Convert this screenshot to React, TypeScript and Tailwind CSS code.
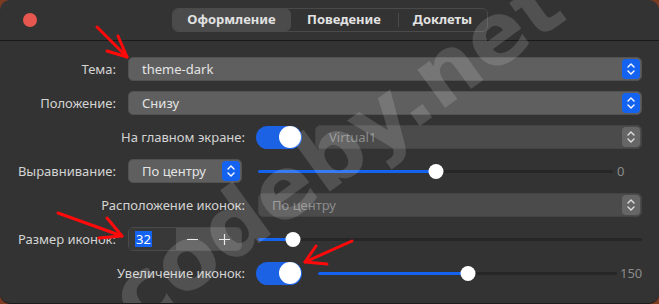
import React from 'react';

const font = { fontFamily: '"Noto Sans", "Open Sans", sans-serif' };

const Chevrons: React.FC<{ color?: string }> = ({ color = '#ffffff' }) => (
  <svg width="10" height="16" viewBox="0 0 10 16" fill="none">
    <path d="M2 6 L5 3 L8 6" stroke={color} strokeWidth="1.4" strokeLinecap="round" strokeLinejoin="round" />
    <path d="M2 10 L5 13 L8 10" stroke={color} strokeWidth="1.4" strokeLinecap="round" strokeLinejoin="round" />
  </svg>
);

const Combo: React.FC<{ value: string; disabled?: boolean; className?: string }> = ({ value, disabled, className }) => (
  <div
    className={`h-6 rounded-[5px] border flex items-center justify-between pl-[13px] pr-[1px] ${
      disabled ? 'bg-[#4b4b4b] border-[#444444] text-[#8c8c8c]' : 'bg-[#5f5f5f] border-[#525252] text-[#e4e4e4]'
    } ${className ?? ''}`}
  >
    <span className="text-[13px] leading-none">{value}</span>
    <div
      className={`w-[18px] h-[20px] rounded-[4px] flex items-center justify-center ${
        disabled ? 'bg-[#666666]' : 'bg-[#1463f0]'
      }`}
    >
      <Chevrons color={disabled ? '#e0e0e0' : '#ffffff'} />
    </div>
  </div>
);

const Toggle: React.FC = () => (
  <div className="w-[46px] h-[23px] rounded-full bg-[#1c62e4] flex items-center justify-end pr-[1px] shrink-0">
    <div className="w-[22px] h-[22px] rounded-full bg-white" />
  </div>
);

const Slider: React.FC<{ pct: number }> = ({ pct }) => (
  <div className="relative flex-1 h-[15px] flex items-center">
    <div className="w-full h-[3px] rounded-full bg-[#262626]" />
    <div className="absolute left-0 h-[3px] rounded-full bg-[#1463f0]" style={{ width: `${pct}%` }} />
    <div
      className="absolute w-[15px] h-[15px] rounded-full bg-white -translate-x-1/2"
      style={{ left: `${pct}%` }}
    />
  </div>
);

const Label: React.FC<{ w: string; children: React.ReactNode }> = ({ w, children }) => (
  <div className={`${w} shrink-0 text-right text-[13px] text-[#d4d4d4] leading-none`}>{children}</div>
);

export default function App() {
  return (
    <div className="w-[659px] h-[304px] bg-[#7a3b22] overflow-hidden" style={font}>
      <div className="relative w-full h-full rounded-[10px] bg-[#333333] border-b border-[#1c1c1c] overflow-hidden">
        {/* Header */}
        <div className="h-[41px] grid grid-cols-[1fr_auto_1fr] items-center border-b border-[#1a1a1a]">
          <div className="pl-[23px]">
            <div className="w-[14px] h-[14px] rounded-full bg-[#e8574f]" />
          </div>
          <div className="flex h-[24px] rounded-[6px] border border-[#4a4a4a] text-[13px] font-bold text-[#e2e2e2]">
            <div className="w-[118px] rounded-[5px] bg-[#4b4b4b] flex items-center justify-center">Оформление</div>
            <div className="w-[107px] flex items-center justify-center">Поведение</div>
            <div className="w-px my-[4px] bg-[#4a4a4a]" />
            <div className="w-[88px] flex items-center justify-center">Доклеты</div>
          </div>
          <div />
        </div>

        {/* Body */}
        <div className="pt-[16px] pr-[17px] flex flex-col gap-[10px]">
          <div className="flex items-center h-6">
            <Label w="w-[116px]">Тема:</Label>
            <Combo value="theme-dark" className="ml-3 flex-1" />
          </div>
          <div className="flex items-center h-6">
            <Label w="w-[116px]">Положение:</Label>
            <Combo value="Снизу" className="ml-3 flex-1" />
          </div>
          <div className="flex items-center h-6">
            <Label w="w-[245px]">На главном экране:</Label>
            <div className="ml-[11px]">
              <Toggle />
            </div>
            <Combo value="Virtual1" disabled className="ml-[13px] flex-1" />
          </div>
          <div className="flex items-center h-6">
            <Label w="w-[116px]">Выравнивание:</Label>
            <Combo value="По центру" className="ml-3 w-[114px]" />
            <div className="ml-4 flex-1 flex items-center">
              <Slider pct={50} />
              <div className="w-[29px] pl-[4px] text-[13px] text-[#8a8a8a] leading-none">0</div>
            </div>
          </div>
          <div className="flex items-center h-6">
            <Label w="w-[245px]">Расположение иконок:</Label>
            <Combo value="По центру" disabled className="ml-[13px] flex-1" />
          </div>
          <div className="flex items-center h-6">
            <Label w="w-[116px]">Размер иконок:</Label>
            <div className="ml-3 w-[114px] h-6 flex rounded-[5px] border border-[#4a4a4a] overflow-hidden">
              <div className="w-[47px] bg-[#383838] flex items-center pl-[6px]">
                <span className="bg-[#1463f0] text-white text-[13px] leading-[16px] px-[1px]">32</span>
              </div>
              <div className="flex-1 bg-[#505050] flex items-center justify-around text-[#e6e6e6]">
                <svg width="11" height="11" viewBox="0 0 11 11">
                  <path d="M0 5.5 H11" stroke="currentColor" strokeWidth="1.2" />
                </svg>
                <svg width="11" height="11" viewBox="0 0 11 11">
                  <path d="M0 5.5 H11 M5.5 0 V11" stroke="currentColor" strokeWidth="1.2" />
                </svg>
              </div>
            </div>
            <div className="ml-4 flex-1 flex items-center">
              <Slider pct={9} />
            </div>
          </div>
          <div className="flex items-center h-6">
            <Label w="w-[245px]">Увеличение иконок:</Label>
            <div className="ml-[11px]">
              <Toggle />
            </div>
            <div className="ml-[16px] flex-1 flex items-center">
              <Slider pct={50} />
              <div className="w-[25px] pl-[3px] text-[13px] text-[#8a8a8a] leading-none">150</div>
            </div>
          </div>
        </div>

        {/* Watermark */}
        <div
          className="pointer-events-none absolute left-[336px] top-[150px] -translate-x-1/2 -translate-y-1/2 -rotate-[36deg] whitespace-nowrap text-[86px] font-bold leading-none text-white/15"
          style={{ fontFamily: '"DejaVu Sans", Verdana, sans-serif' }}
        >
          codeby.net
        </div>

        {/* Annotation arrows */}
        <svg className="pointer-events-none absolute inset-0" width="659" height="304" viewBox="0 0 659 304" fill="none">
          <g stroke="#ff0a0a" strokeWidth="3" strokeLinecap="round" strokeLinejoin="round">
            <path d="M97 27 L127 57" />
            <path d="M118 36 L127 57 L107 51" />
            <path d="M58 213 L122 236" />
            <path d="M107 218 L122 236 L99 238" />
            <path d="M352 241 L305 262" />
            <path d="M316 246 L305 262 L327 264" />
          </g>
        </svg>
      </div>
    </div>
  );
}
